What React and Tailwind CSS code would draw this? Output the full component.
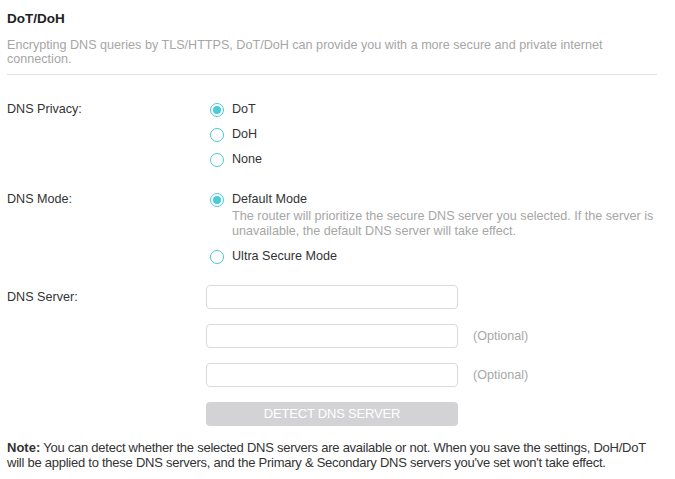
import React from "react";

function Radio({ checked, label }) {
  return (
    <div className="flex items-center h-[25px] ml-[4px]">
      <span className="w-[14px] h-[14px] rounded-full border border-[#4acbd6] flex items-center justify-center shrink-0">
        {checked && <span className="w-[8px] h-[8px] rounded-full bg-[#4acbd6]"></span>}
      </span>
      <span className="ml-[8px] text-[12.6px] text-[#333]">{label}</span>
    </div>
  );
}

function Field({ optional }) {
  return (
    <div className="flex items-center">
      <div className="w-[252px] h-[24px] rounded-[4px] border border-[#d9d9d9] bg-white"></div>
      {optional && <span className="ml-[15px] text-[12.6px] text-[#a8a8a8]">(Optional)</span>}
    </div>
  );
}

export default function App() {
  return (
    <div className="w-[675px] h-[479px] bg-white overflow-hidden font-['Liberation_Sans',Arial,sans-serif] px-[7px] pt-[11px]">
      {/* Header */}
      <h1 className="text-[13.5px] font-bold text-[#222] leading-[16px]">DoT/DoH</h1>
      <p className="mt-[11px] text-[12.6px] leading-[14px] text-[#a6a6a6] w-[640px]">
        Encrypting DNS queries by TLS/HTTPS, DoT/DoH can provide you with a more secure and private internet connection.
      </p>
      <div className="mt-[8px] w-[650px] border-t border-[#e3e3e3]"></div>

      {/* DNS Privacy */}
      <div className="flex mt-[22px]">
        <div className="w-[199px] shrink-0 h-[25px] flex items-center text-[12.6px] text-[#333]">DNS Privacy:</div>
        <div className="flex flex-col">
          <Radio checked label="DoT" />
          <Radio label="DoH" />
          <Radio label="None" />
        </div>
      </div>

      {/* DNS Mode */}
      <div className="flex mt-[15px]">
        <div className="w-[199px] shrink-0 h-[25px] flex items-center text-[12.6px] text-[#333]">DNS Mode:</div>
        <div className="flex flex-col">
          <Radio checked label="Default Mode" />
          <p className="ml-[26px] -mt-[3px] w-[430px] text-[12.6px] leading-[15px] text-[#a6a6a6]">
            The router will prioritize the secure DNS server you selected. If the server is unavailable, the default DNS server will take effect.
          </p>
          <div className="mt-[5px]">
            <Radio label="Ultra Secure Mode" />
          </div>
        </div>
      </div>

      {/* DNS Server */}
      <div className="flex mt-[16px]">
        <div className="w-[199px] shrink-0 h-[24px] flex items-center text-[12.6px] text-[#333]">DNS Server:</div>
        <div className="flex flex-col gap-[15px]">
          <Field />
          <Field optional />
          <Field optional />
          <button className="w-[252px] h-[24px] rounded-[4px] bg-[#d3d3d5] text-white text-[13px] tracking-[-0.2px]">
            DETECT DNS SERVER
          </button>
        </div>
      </div>

      {/* Note */}
      <p className="mt-[14px] w-[652px] text-[13px] leading-[15px] text-[#333]">
        <b className="mr-[3px]">Note:</b>
        <span className="tracking-[-0.25px]">
          You can detect whether the selected DNS servers are available or not. When you save the settings, DoH/DoT will be applied to these DNS servers, and the Primary &amp; Secondary DNS servers you've set won't take effect.
        </span>
      </p>
    </div>
  );
}
